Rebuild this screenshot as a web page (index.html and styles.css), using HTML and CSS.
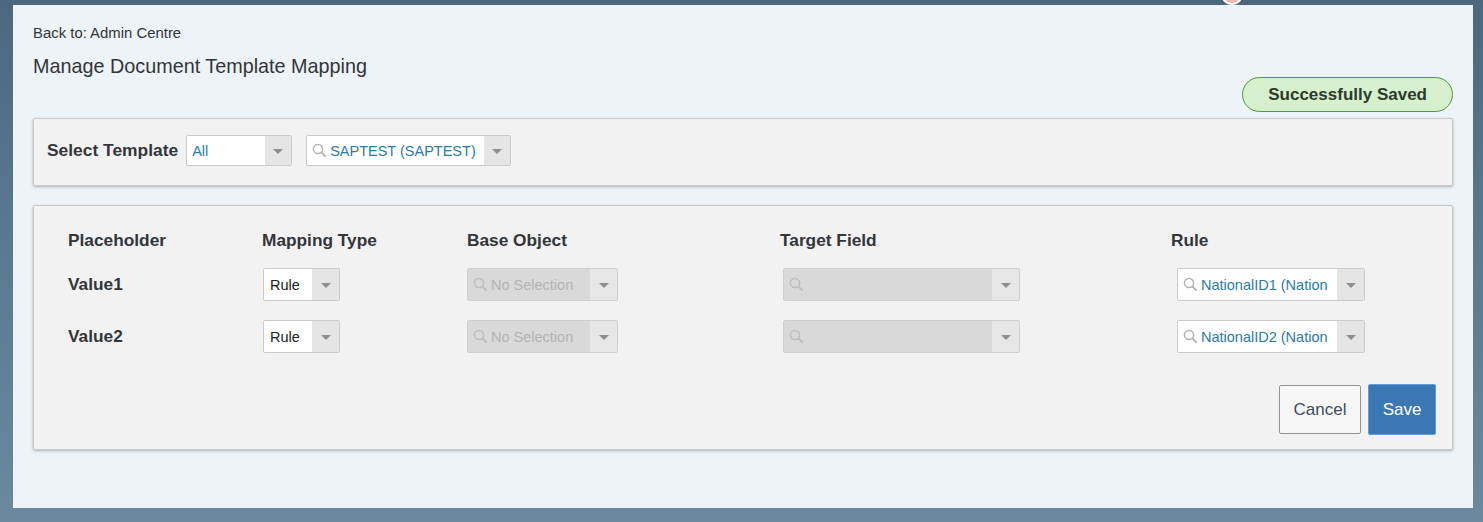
FILE: index.html
```html
<!DOCTYPE html>
<html lang="en">
<head>
    <meta charset="UTF-8">
    <meta name="viewport" content="width=device-width, initial-scale=1.0">
    <title>Manage Document Template Mapping</title>
    <link rel="stylesheet" href="styles.css">
</head>
<body>

    <div class="avatar"></div>

    <div class="page">
        <div class="back">Back to: Admin Centre</div>
        <h1 class="title">Manage Document Template Mapping</h1>

        <div class="status-row">
            <span class="status">Successfully Saved</span>
        </div>

        <div class="panel template-panel">
            <span class="field-label">Select Template</span>
            <div class="combo combo-all">
                <span class="combo-text link">All</span>
                <span class="combo-arrow"></span>
            </div>
            <div class="combo combo-template">
                <svg class="search" width="15" height="15" viewBox="0 0 15 15"><circle cx="6" cy="6" r="4.6" fill="none" stroke="#b4b4b4" stroke-width="1.5"/><line x1="9.4" y1="9.4" x2="13.6" y2="13.6" stroke="#b4b4b4" stroke-width="2"/></svg>
                <span class="combo-text link">SAPTEST (SAPTEST)</span>
                <span class="combo-arrow"></span>
            </div>
        </div>

        <div class="panel mapping-panel">
            <div class="mapping-grid">
                <div class="col-head">Placeholder</div>
                <div class="col-head">Mapping Type</div>
                <div class="col-head">Base Object</div>
                <div class="col-head">Target Field</div>
                <div class="col-head">Rule</div>

                <!-- row 1 -->
                <div class="row-label">Value1</div>
                <div class="cell">
                    <div class="combo combo-type">
                        <span class="combo-text">Rule</span>
                        <span class="combo-arrow"></span>
                    </div>
                </div>
                <div class="cell">
                    <div class="combo combo-base disabled">
                        <svg class="search" width="15" height="15" viewBox="0 0 15 15"><circle cx="6" cy="6" r="4.6" fill="none" stroke="#bdbdbd" stroke-width="1.5"/><line x1="9.4" y1="9.4" x2="13.6" y2="13.6" stroke="#bdbdbd" stroke-width="2"/></svg>
                        <span class="combo-text">No Selection</span>
                        <span class="combo-arrow"></span>
                    </div>
                </div>
                <div class="cell">
                    <div class="combo combo-target disabled">
                        <svg class="search" width="15" height="15" viewBox="0 0 15 15"><circle cx="6" cy="6" r="4.6" fill="none" stroke="#bdbdbd" stroke-width="1.5"/><line x1="9.4" y1="9.4" x2="13.6" y2="13.6" stroke="#bdbdbd" stroke-width="2"/></svg>
                        <span class="combo-text"></span>
                        <span class="combo-arrow"></span>
                    </div>
                </div>
                <div class="cell">
                    <div class="combo combo-rule">
                        <svg class="search" width="15" height="15" viewBox="0 0 15 15"><circle cx="6" cy="6" r="4.6" fill="none" stroke="#b4b4b4" stroke-width="1.5"/><line x1="9.4" y1="9.4" x2="13.6" y2="13.6" stroke="#b4b4b4" stroke-width="2"/></svg>
                        <span class="combo-text link">NationalID1 (NationalID1)</span>
                        <span class="combo-arrow"></span>
                    </div>
                </div>

                <!-- row 2 -->
                <div class="row-label">Value2</div>
                <div class="cell">
                    <div class="combo combo-type">
                        <span class="combo-text">Rule</span>
                        <span class="combo-arrow"></span>
                    </div>
                </div>
                <div class="cell">
                    <div class="combo combo-base disabled">
                        <svg class="search" width="15" height="15" viewBox="0 0 15 15"><circle cx="6" cy="6" r="4.6" fill="none" stroke="#bdbdbd" stroke-width="1.5"/><line x1="9.4" y1="9.4" x2="13.6" y2="13.6" stroke="#bdbdbd" stroke-width="2"/></svg>
                        <span class="combo-text">No Selection</span>
                        <span class="combo-arrow"></span>
                    </div>
                </div>
                <div class="cell">
                    <div class="combo combo-target disabled">
                        <svg class="search" width="15" height="15" viewBox="0 0 15 15"><circle cx="6" cy="6" r="4.6" fill="none" stroke="#bdbdbd" stroke-width="1.5"/><line x1="9.4" y1="9.4" x2="13.6" y2="13.6" stroke="#bdbdbd" stroke-width="2"/></svg>
                        <span class="combo-text"></span>
                        <span class="combo-arrow"></span>
                    </div>
                </div>
                <div class="cell">
                    <div class="combo combo-rule">
                        <svg class="search" width="15" height="15" viewBox="0 0 15 15"><circle cx="6" cy="6" r="4.6" fill="none" stroke="#b4b4b4" stroke-width="1.5"/><line x1="9.4" y1="9.4" x2="13.6" y2="13.6" stroke="#b4b4b4" stroke-width="2"/></svg>
                        <span class="combo-text link">NationalID2 (NationalID2)</span>
                        <span class="combo-arrow"></span>
                    </div>
                </div>
            </div>

            <div class="actions">
                <button class="btn btn-cancel">Cancel</button>
                <button class="btn btn-save">Save</button>
            </div>
        </div>
    </div>

</body>
</html>
```

FILE: styles.css
```css
* {
    margin: 0;
    padding: 0;
    box-sizing: border-box;
}

html, body {
    height: 100%;
}

body {
    font-family: "Liberation Sans", Arial, sans-serif;
    color: #32363a;
    background: linear-gradient(to bottom, #4c687e 0%, #5e7d93 60%, #6a899f 100%);
    padding: 5px 10px 0 13px;
    position: relative;
    overflow: hidden;
}

.avatar {
    position: absolute;
    top: -17px;
    left: 1221px;
    width: 22px;
    height: 22px;
    border-radius: 50%;
    border: 2px solid #fff;
    background-color: #e7b9ae;
}

.page {
    height: 503px;
    background-color: #eef3f8;
    padding: 19px 20px 0 20px;
    position: relative;
}

.back {
    font-size: 14.9px;
    line-height: 18px;
    color: #32363a;
}

.title {
    font-size: 19.8px;
    font-weight: normal;
    line-height: 24px;
    margin-top: 12px;
    color: #32363a;
}

.status-row {
    display: flex;
    justify-content: flex-end;
    margin-top: -1px;
}

.status {
    height: 35px;
    padding: 0 25px;
    border: 1px solid #4f9a3c;
    border-radius: 18px;
    background-color: #d6f0cd;
    color: #2c3a2c;
    font-size: 17px;
    font-weight: bold;
    display: flex;
    align-items: center;
}

.panel {
    background-color: #f2f2f2;
    border: 1px solid #c9c9c9;
    border-radius: 2px;
    box-shadow: 0 1px 3px rgba(0, 0, 0, 0.28);
}

.template-panel {
    margin-top: 6px;
    height: 68px;
    padding: 16px 13px 0 13px;
    display: flex;
    align-items: flex-start;
}

.field-label {
    font-size: 17.4px;
    font-weight: bold;
    line-height: 31px;
    margin-right: 8px;
    color: #32363a;
}

/* combo boxes */
.combo {
    display: flex;
    align-items: center;
    height: 33px;
    background-color: #fff;
    border: 1px solid #cbcbcb;
    border-radius: 2px;
    overflow: hidden;
}

.combo-text {
    flex: 1;
    font-size: 14.5px;
    color: #222;
    white-space: nowrap;
    overflow: hidden;
    padding-left: 5px;
}

.combo-text.link {
    color: #2a7ca8;
}

.combo .search {
    flex: none;
    margin-left: 5px;
}

.combo .search + .combo-text {
    padding-left: 3px;
}

.combo-arrow {
    flex: none;
    width: 27px;
    align-self: stretch;
    background-color: #e5e5e5;
    display: flex;
    align-items: center;
    justify-content: center;
}

.combo-arrow::after {
    content: "";
    border-left: 5px solid transparent;
    border-right: 5px solid transparent;
    border-top: 5px solid #8e8e8e;
    margin-top: 2px;
}

.combo-all {
    width: 106px;
    height: 31px;
}

.combo-all .combo-arrow {
    width: 26px;
}

.combo-template {
    width: 205px;
    height: 31px;
    margin-left: 14px;
}

.combo-template .combo-arrow {
    width: 26px;
}

.combo.disabled {
    background-color: #d9d9d9;
    border-color: #cfcfcf;
}

.combo.disabled .combo-text {
    color: #b3b3b3;
}

.combo.disabled .combo-arrow {
    background-color: #e6e6e6;
}

.combo-type {
    width: 77px;
    margin-left: 1px;
}

.combo-type .combo-text {
    padding-left: 6px;
}

.combo-base {
    width: 151px;
}

.combo-target {
    width: 237px;
    margin-left: 3px;
}

.combo-rule {
    width: 188px;
    margin-left: 6px;
}

.combo-rule .combo-text {
    margin-right: 10px;
}

/* mapping table */
.mapping-panel {
    margin-top: 19px;
    height: 245px;
    padding: 25px 16px 0 34px;
}

.mapping-grid {
    display: grid;
    grid-template-columns: 194px 205px 313px 391px 1fr;
    grid-template-rows: 18px 33px 33px;
    row-gap: 19px;
    align-items: center;
}

.col-head {
    font-size: 17.3px;
    font-weight: bold;
    line-height: 18px;
    color: #32363a;
}

.row-label {
    font-size: 17.3px;
    font-weight: bold;
    color: #32363a;
}

.cell {
    display: flex;
}

.actions {
    display: flex;
    justify-content: flex-end;
    align-items: center;
    gap: 7px;
    margin-top: 31px;
}

.btn {
    font-family: "Liberation Sans", Arial, sans-serif;
    font-size: 17px;
    border-radius: 2px;
    cursor: pointer;
}

.btn-cancel {
    width: 82px;
    height: 49px;
    background-color: #f7f7f7;
    border: 1px solid #939393;
    color: #3f4d5c;
}

.btn-save {
    width: 68px;
    height: 51px;
    background-color: #3a77b3;
    border: 1px solid #5d9de0;
    color: #fff;
}
```
